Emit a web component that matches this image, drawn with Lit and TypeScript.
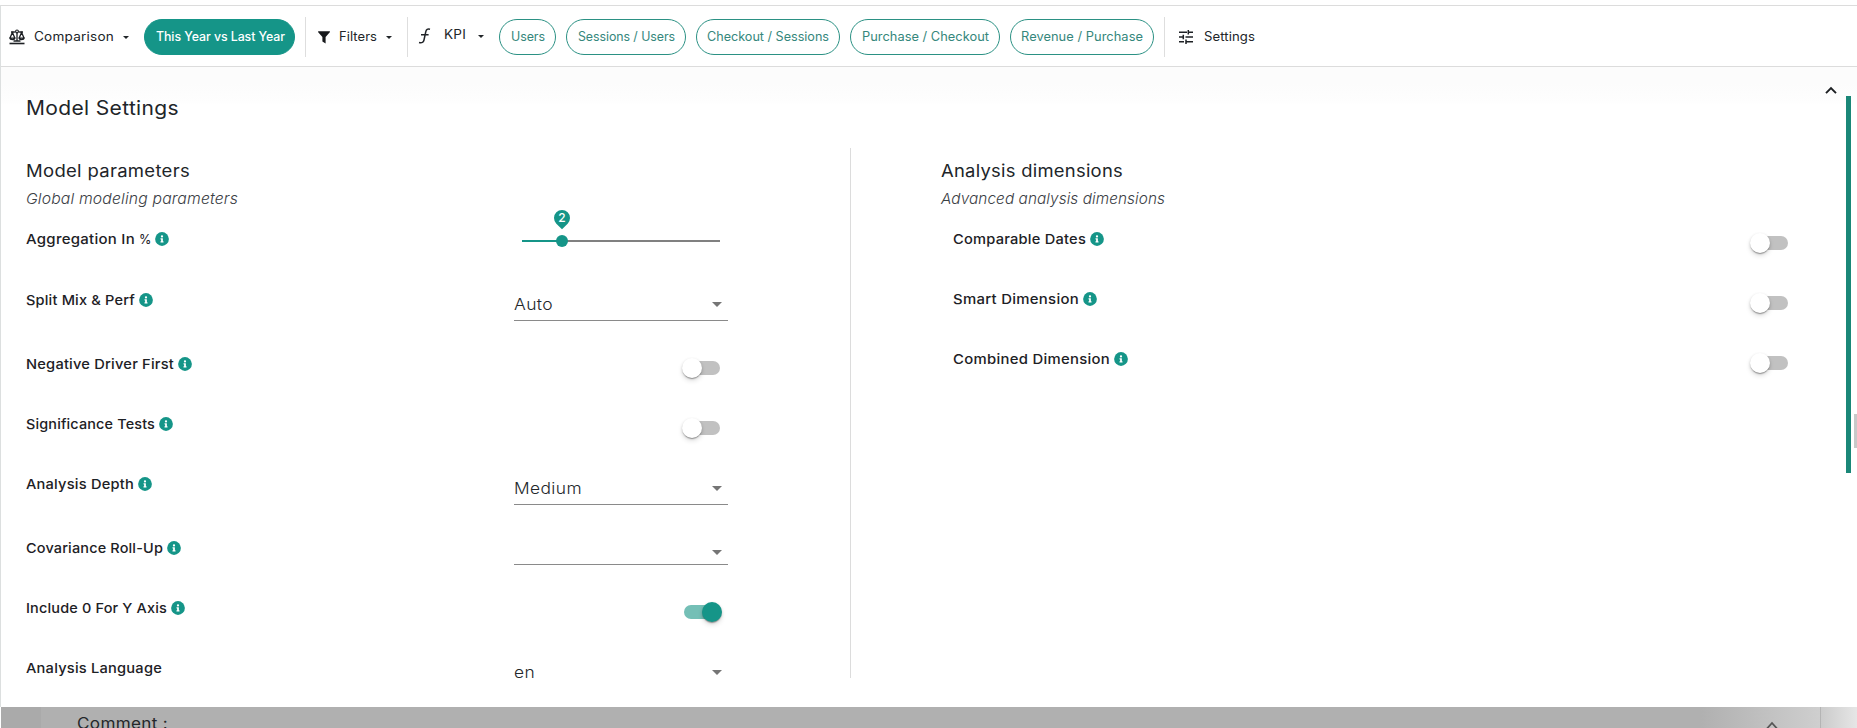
import { LitElement, html, svg, css, nothing } from "lit";
import { customElement, property, query } from "lit/decorators.js";

/** A single line of text, widened by glyph stretch and tracking to fill a given width. */
@customElement("fit-text")
class FitText extends LitElement {
  @property() text = "";
  @property({ type: Number }) size = 0;
  @query("span") run!: HTMLSpanElement;
  static styles = css`
    :host { display: inline-block; white-space: pre; flex: none; }
    span { display: inline-block; transform-origin: 0 50%; }
  `;
  render() { return html`<span>${this.text}</span>`; }
  updated() {
    this.run.style.letterSpacing = "0px";
    this.run.style.transform = "none";
    const natural = this.run.getBoundingClientRect().width;
    const stretch = 1 + (this.size / natural - 1) * 0.7;
    const step = (this.size / stretch - natural) / this.text.length;
    this.run.style.letterSpacing = `${step}px`;
    this.run.style.transform = `scaleX(${stretch})`;
    this.style.width = `${this.size}px`;
  }
}

const fit = (text: string, size: number) => html`<fit-text .text=${text} .size=${size}></fit-text>`;

@customElement("info-dot")
class InfoDot extends LitElement {
  static styles = css`:host { display: block; width: 14px; height: 14px; flex: none; } svg { display: block; }`;
  render() {
    return html`<svg width="14" height="14" viewBox="0 0 512 512"><circle cx="256" cy="256" r="252" fill="#159588"/>
      <path fill="#fff" d="M256 118a42 42 0 1 1 0 84 42 42 0 1 1 0-84zm56 254a12 12 0 0 1-12 12h-88a12 12 0 0 1-12-12v-24a12 12 0 0 1 12-12h12v-64h-12a12 12 0 0 1-12-12v-24a12 12 0 0 1 12-12h64a12 12 0 0 1 12 12v100h12a12 12 0 0 1 12 12z"/></svg>`;
  }
}

@customElement("slide-toggle")
class SlideToggle extends LitElement {
  @property({ type: Boolean, reflect: true }) on = false;
  static styles = css`
    :host { display: flex; align-items: center; width: 36px; height: 14px; border-radius: 7px; background: #c1c1c1; }
    .knob { width: 20px; height: 20px; flex: none; border-radius: 50%; background: #fff; margin-left: -2px;
      box-shadow: 0 2px 1px -1px rgba(0,0,0,.2), 0 1px 1px rgba(0,0,0,.14), 0 1px 3px rgba(0,0,0,.12), 0 3px 5px rgba(0,0,0,.12); }
    :host([on]) { background: #74bfb6; }
    :host([on]) .knob { background: #159588; margin-left: 18px; }
  `;
  render() { return html`<div class="knob"></div>`; }
}

@customElement("select-field")
class SelectField extends LitElement {
  @property() value = "";
  @property({ type: Number }) size = 0;
  static styles = css`
    :host { display: flex; align-items: center; justify-content: space-between; height: 32px; width: 214px;
      box-sizing: border-box; padding-right: 6.5px; font-size: 15.8px; font-weight: 300; color: #23272b; }
    .caret { border: 5px solid transparent; border-top-color: #757575; border-bottom: 0; margin-left: auto; margin-top: 1px; }
  `;
  render() { return html`${this.value ? fit(this.value, this.size) : nothing}<span class="caret"></span>`; }
}

type Row = { label: string; w: number; tail?: string; info?: boolean; h: number; kind: "slider" | "select" | "toggle"; on?: boolean; value?: string; vw?: number; line?: string };

const params: Row[] = [
  { label: "Aggregation In", w: 109, tail: "%", info: true, h: 61, kind: "slider" },
  { label: "Split Mix & Perf", w: 109, info: true, h: 64, kind: "select", value: "Auto", vw: 39, line: "full" },
  { label: "Negative Driver First", w: 148, info: true, h: 60, kind: "toggle" },
  { label: "Significance Tests", w: 129, info: true, h: 60, kind: "toggle" },
  { label: "Analysis Depth", w: 108, info: true, h: 64, kind: "select", value: "Medium", vw: 68, line: "full" },
  { label: "Covariance Roll-Up", w: 137, info: true, h: 60, kind: "select", line: "tight" },
  { label: "Include 0 For Y Axis", w: 141, info: true, h: 60, kind: "toggle", on: true },
  { label: "Analysis Language", w: 136, h: 60, kind: "select", value: "en", vw: 21, line: "none" },
];
const dims: Row[] = [
  { label: "Comparable Dates", w: 133, info: true, h: 60, kind: "toggle" },
  { label: "Smart Dimension", w: 126, info: true, h: 60, kind: "toggle" },
  { label: "Combined Dimension", w: 157, info: true, h: 60, kind: "toggle" },
];
const kpis = [
  { text: "Users", w: 34, pill: 57 },
  { text: "Sessions / Users", w: 97, pill: 120 },
  { text: "Checkout / Sessions", w: 122, pill: 144 },
  { text: "Purchase / Checkout", w: 127, pill: 150 },
  { text: "Revenue / Purchase", w: 122, pill: 144 },
];

const scales = svg`<path fill="none" stroke="#1d2024" stroke-width="1.3" d="M8 3.500v8M2 3h3.900M10.100 3H14M1.100 8.800 3.400 3.400l2.300 5.400M10.300 8.800l2.300-5.400 2.300 5.400M.8 9.100h5.200c-.3 2.100-4.900 2.100-5.200 0zM10 9.100h5.200c-.3 2.100-4.900 2.100-5.200 0zM4.500 12h7"/><path stroke="#1d2024" stroke-width="1.600" d="M.5 14.500h15"/><circle cx="8" cy="2.400" r="1.400" fill="none" stroke="#1d2024" stroke-width="1.200"/>`;

@customElement("app-root")
class AppRoot extends LitElement {
  static styles = css`
    :host { display: block; box-sizing: border-box; width: 1857px; height: 728px; overflow: hidden; position: relative;
      background: #fff; font-family: Inter, "Noto Sans", sans-serif; color: #212529; padding-top: 5px; }
    svg { display: block; flex: none; }
    .frame { border-left: 1px solid #dcdfdf; height: 702px; box-sizing: border-box; }
    .bar { height: 62px; box-sizing: border-box; border-top: 1px solid #dcdcdc; border-bottom: 1px solid #dcdcdc;
      display: flex; align-items: center; font-size: 12.7px; padding-left: 8px; }
    .bar fit-text { line-height: 20px; }
    .item { display: flex; align-items: center; height: 40px; margin-top: 2px; box-sizing: border-box; }
    .caret { border: 3.5px solid transparent; border-top-color: #212529; border-bottom: 0; }
    .cmp { width: 135px; } .cmp fit-text { margin: 0 9px 0 9px; }
    .pill { height: 36px; border-radius: 18px; border: 1px solid #2b9184; color: #35877c; display: flex; align-items: center;
      justify-content: center; box-sizing: border-box; margin-top: 2px; font-weight: 400; flex: none; }
    .solid { background: #159588; border-color: #159588; color: #fff; font-weight: 500; width: 151px; padding-left: 1px; }
    .filters { margin-left: 10px; border-left: 1px solid #dedede; width: 102px; padding-left: 12px; }
    .filters fit-text { margin: 0 9px 0 9px; }
    .kpi { border-left: 1px solid #dedede; width: 92px; padding-left: 10px; }
    .kpi fit-text { margin: -4px 12px 0 13px; }
    .kpi svg { margin-top: -2px; } .kpi .caret { margin-top: -1px; }
    .pills { display: flex; gap: 10px; }
    .prefs { margin-left: 10px; border-left: 1px solid #dedede; padding-left: 14px; gap: 11px; }
    .panel { height: 640px; display: flex; padding-left: 25px; box-sizing: border-box; position: relative;
      background: linear-gradient(#fcfcfc 0, #fcfcfc 16px, #fefefe 36px, #fff 37px); }
    .left { width: 702px; }
    .title { font-size: 19.4px; line-height: 30px; height: 30px; padding-top: 26px; }
    .head { font-size: 17.2px; line-height: 24px; height: 24px; }
    .title, .head { font-weight: 400; }
    .sub { font-size: 15px; font-weight: 300; font-style: italic; line-height: 20px; height: 20px; padding: 6px 0 0; color: #3b4045; }
    .left .head { padding-top: 36px; }
    .row { display: flex; justify-content: space-between; }
    .label { display: flex; align-items: center; height: 60px; font-size: 13.7px; font-weight: 500; gap: 4px; line-height: 60px; color: #1d2125; }
    .tail { font-weight: 400; display: flex; }
    .toggle { margin-top: 27px; margin-right: 8px; }
    .right .toggle { margin-right: 0; }
    .control { width: 214px; display: flex; justify-content: flex-end; }
    .full, .tight { height: 51px; border-bottom: 1px solid #8a8a8a; box-sizing: border-box; padding-top: 18px; }
    .tight { height: 47px; }
    .none { padding-top: 18px; }
    .slider { width: 198px; height: 2px; margin: 31px 8px 0; background: #808080; position: relative; }
    .fill { height: 2px; background: #159588; }
    .thumb { position: absolute; width: 12px; height: 12px; border-radius: 50%; background: #159588; top: -5px; left: 34px; }
    .pin { position: absolute; left: 32px; top: -30px; width: 16px; height: 16px; border-radius: 50% 50% 0 50%; transform: rotate(45deg);
      background: #159588; }
    .pin span { display: block; transform: rotate(-45deg); font-size: 12px; line-height: 16px; text-align: center; color: #fff; font-weight: 500; }
    .rule { width: 1px; background: #dcdcdc; margin: 81px 0 0 122px; height: 530px; }
    .right { margin-left: 90px; width: 847px; padding-top: 92px; }
    .right .rows { padding-left: 12px; }
    .chev { position: absolute; left: 1824px; top: 18px; }
    .scroll { position: absolute; left: 1845px; top: 29px; width: 5px; height: 377px; background: #1a8778; }
    .grip { position: absolute; left: 1853px; top: 347px; width: 3px; height: 34px; background: #c9c9c9; }
    .foot { height: 21px; display: flex; margin-left: 1px; overflow: hidden;
      background: linear-gradient(90deg, #b0b0b0 0, #b0b0b0 1700px, #cfcfcf 1820px); }
    .gutter { width: 40px; background: #aaa; flex: none; }
    .note { width: 1780px; box-sizing: border-box; padding-left: 36px; font-size: 15.8px; line-height: 20px; padding-top: 7px; display: flex;
      justify-content: space-between; padding-right: 42px; flex: none; border-right: 1px solid #b4b4b4; color: #24272a; }
    .note svg { margin-top: 7px; }
    .edge { flex: 1; background: linear-gradient(90deg, #cbcbcb, #e6e6e6); }
  `;

  control(r: Row) {
    if (r.kind === "toggle") return html`<slide-toggle class="toggle" ?on=${!!r.on}></slide-toggle>`;
    if (r.kind === "slider") return html`<div class="slider"><div class="fill" style="width:20%"></div>
      <div class="thumb"></div><div class="pin"><span>2</span></div></div>`;
    return html`<div class=${r.line!}><select-field .value=${r.value ?? ""} .size=${r.vw ?? 0}></select-field></div>`;
  }

  row(r: Row) {
    return html`<div class="row" style="height:${r.h}px">
      <div class="label">${fit(r.label, r.w)}${r.tail ? html`<span class="tail">${fit(r.tail, 12)}</span>` : nothing}
        ${r.info ? html`<info-dot></info-dot>` : nothing}</div>
      <div class="control">${this.control(r)}</div></div>`;
  }

  render() {
    return html`
      <div class="frame">
        <div class="bar">
          <div class="item cmp"><svg width="16" height="16" viewBox="0 0 16 16">${scales}</svg>${fit("Comparison", 80)}<span class="caret"></span></div>
          <div class="pill solid">${fit("This Year vs Last Year", 129)}</div>
          <div class="item filters"><svg width="12" height="13" viewBox="0 0 12 13"><path fill="#17191c" d="M.3.3h11.400q.5.400.1.900L7.600 6v6.600L4.400 10.500V6L.2 1.200Q-.1.600.3.300z"/></svg>${fit("Filters", 38)}<span class="caret"></span></div>
          <div class="item kpi"><svg width="13" height="16" viewBox="0 0 13 16"><path fill="none" stroke="#222529" stroke-width="1.500" d="M12 1.300C9.500.6 8.300 1.300 7.800 3.600L6 12c-.5 2.400-2 3.200-5 2.500M3 6.800h7.600"/></svg>${fit("KPI", 22)}<span class="caret"></span></div>
          <div class="pills">${kpis.map(k => html`<div class="pill" style="width:${k.pill}px">${fit(k.text, k.w)}</div>`)}</div>
          <div class="item prefs"><svg width="14" height="14" viewBox="0 0 14 14"><path fill="none" stroke="#1d2024" stroke-width="1.500" d="M0 2.300h8M10 2.300h4M9.300 0v4.500M0 7h4.300M6.500 7H14M4.300 4.700v4.600M0 11.700h5M7.500 11.700H14M7 9.400V14"/></svg>${fit("Settings", 51)}</div>
        </div>
        <div class="panel">
          <div class="left">
            <div class="title">${fit("Model Settings", 153)}</div>
            <div class="head">${fit("Model parameters", 164)}</div>
            <div class="sub">${fit("Global modeling parameters", 212)}</div>
            <div class="rows">${params.map(r => this.row(r))}</div>
          </div>
          <div class="rule"></div>
          <div class="right">
            <div class="head">${fit("Analysis dimensions", 182)}</div>
            <div class="sub">${fit("Advanced analysis dimensions", 224)}</div>
            <div class="rows">${dims.map(r => this.row(r))}</div>
          </div>
          <svg class="chev" width="12" height="10" viewBox="0 0 12 10"><path fill="none" stroke="#1c1f22" stroke-width="1.900" d="M1 8.200 6 3l5 5.200"/></svg>
          <div class="scroll"></div>
          <div class="grip"></div>
        </div>
      </div>
      <div class="foot"><div class="gutter"></div>
        <div class="note">${fit("Comment :", 91)}<svg width="12" height="10" viewBox="0 0 12 10"><path fill="none" stroke="#555" stroke-width="1.800" d="M1 7.500 6 2l5 5.500"/></svg></div>
        <div class="edge"></div></div>`;
  }
}
